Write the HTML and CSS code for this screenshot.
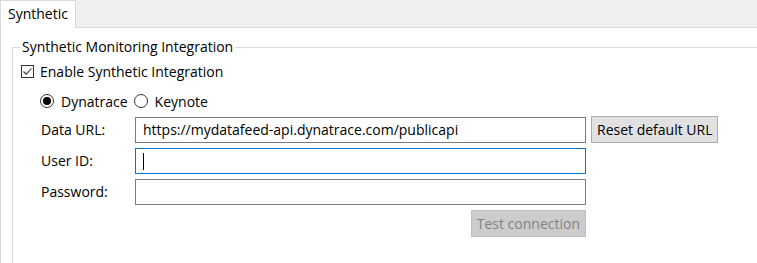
FILE: index.html
```html
<!DOCTYPE html>
<html lang="en">
<head>
    <meta charset="UTF-8" />
    <title>Synthetic</title>
    <link rel="stylesheet" href="styles.css">
</head>
<body>
    <div class="tabbar">
        <div class="tab active">Synthetic</div>
    </div>

    <div class="pane">
        <fieldset class="group">
            <legend>Synthetic Monitoring Integration</legend>

            <label class="check-row">
                <span class="checkbox checked">
                    <svg width="11" height="11" viewBox="0 0 11 11"><path d="M1.5 5.5 L4.2 8.2 L9.5 2.5" fill="none" stroke="#333" stroke-width="1.1"/></svg>
                </span>
                Enable Synthetic Integration
            </label>

            <div class="radio-row">
                <label class="radio-item"><span class="radio checked"></span>Dynatrace</label>
                <label class="radio-item"><span class="radio"></span>Keynote</label>
            </div>

            <div class="form">
                <span class="field-label">Data URL:</span>
                <div class="input">https://mydatafeed-api.dynatrace.com/publicapi</div>
                <button class="btn">Reset default URL</button>

                <span class="field-label">User ID:</span>
                <div class="input focused"><span class="caret"></span></div>
                <span></span>

                <span class="field-label">Password:</span>
                <div class="input"></div>
                <span></span>

                <span></span>
                <div class="actions"><button class="btn disabled">Test connection</button></div>
                <span></span>
            </div>
        </fieldset>
    </div>
</body>
</html>
```

FILE: styles.css
```css
* {
    margin: 0;
    padding: 0;
    box-sizing: border-box;
}

body {
    font-family: 'Open Sans', 'Noto Sans', sans-serif;
    font-size: 14px;
    color: #000;
    background: #fff;
    overflow: hidden;
    height: 100vh;
}

/* Tab strip */
.tabbar {
    height: 28px;
    background: #f0f0f0;
    border-bottom: 1px solid #d9d9d9;
    display: flex;
    align-items: flex-end;
}

.tab {
    height: 28px;
    margin-bottom: -1px;
    width: 76px;
    padding: 4px 0 0 7px;
    background: #fff;
    border: 1px solid #d9d9d9;
    border-bottom: none;
    line-height: 18px;
}

/* Content pane */
.pane {
    height: calc(100vh - 28px);
    border-left: 1px solid #d9d9d9;
    padding: 9px 0 0 11px;
    overflow: hidden;
}

.group {
    border: 1px solid #dcdcdc;
    border-right: none;
    border-bottom: none;
    height: 100%;
    padding: 0 0 0 8px;
}

.group legend {
    padding: 0 2px;
    margin-left: -1px;
    line-height: 20px;
}

.check-row {
    display: flex;
    align-items: center;
    gap: 6px;
    height: 22px;
    margin-top: 3px;
}

.checkbox {
    width: 13px;
    height: 13px;
    border: 1px solid #333;
    background: #fff;
    display: flex;
    align-items: center;
    justify-content: center;
}

.radio-row {
    display: flex;
    gap: 6px;
    margin: 9px 0 0 19px;
    height: 20px;
    align-items: center;
}

.radio-item {
    display: flex;
    align-items: center;
    gap: 7px;
}

.radio {
    width: 14px;
    height: 14px;
    border: 1px solid #333;
    border-radius: 50%;
    display: flex;
    align-items: center;
    justify-content: center;
}

.radio.checked::after {
    content: "";
    width: 8px;
    height: 8px;
    border-radius: 50%;
    background: #000;
}

/* Form grid */
.form {
    display: grid;
    grid-template-columns: 94px 451px auto;
    row-gap: 5px;
    align-items: center;
    margin: 5px 0 0 20px;
    justify-items: start;
}

.field-label {
    line-height: 20px;
}

.input {
    width: 451px;
    height: 26px;
    border: 1px solid #7a7a7a;
    background: #fff;
    padding: 0 7px;
    line-height: 24px;
    white-space: nowrap;
    overflow: hidden;
}

.input.focused {
    border-color: #0078d7;
    display: flex;
    align-items: center;
}

.caret {
    width: 1px;
    height: 17px;
    background: #000;
}

.btn {
    font-family: inherit;
    font-size: 14px;
    color: #000;
    height: 27px;
    margin-left: 5px;
    padding: 0 5px;
    background: #e1e1e1;
    border: 1px solid #adadad;
    line-height: 24px;
}

.btn.disabled {
    background: #cccccc;
    border-color: #bfbfbf;
    color: #838383;
}

.actions {
    width: 451px;
    display: flex;
    justify-content: flex-end;
}
```
